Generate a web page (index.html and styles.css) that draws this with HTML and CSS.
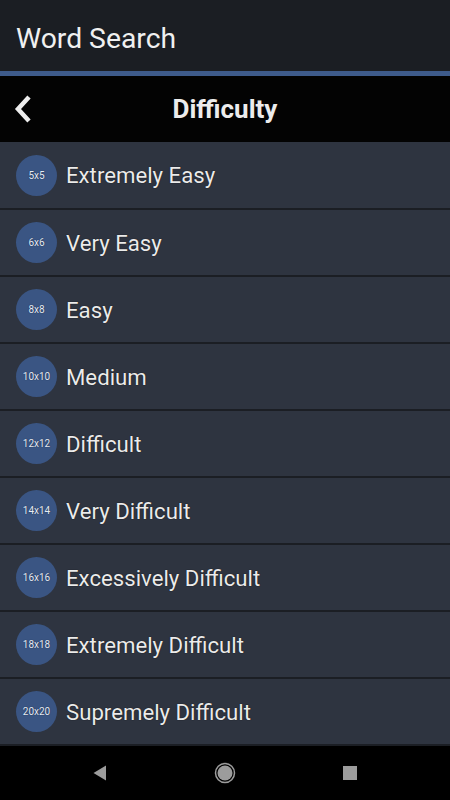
FILE: index.html
```html
<!DOCTYPE html>
<html>
<head>
<meta charset="utf-8">
<link rel="stylesheet" href="styles.css">
</head>
<body>
<div class="app">
  <header class="appbar">Word Search</header>
  <div class="stripe"></div>
  <div class="subbar">
    <svg class="back" width="20" height="30" viewBox="0 0 20 30"><polyline points="15,3 4,15 15,27" fill="none" stroke="#eeeeee" stroke-width="4.5" stroke-linecap="butt" stroke-linejoin="miter"/></svg>
    <h1 class="title">Difficulty</h1>
  </div>
  <ul class="list">
    <li class="row"><span class="badge">5x5</span><span class="label">Extremely Easy</span></li>
    <li class="row"><span class="badge">6x6</span><span class="label">Very Easy</span></li>
    <li class="row"><span class="badge">8x8</span><span class="label">Easy</span></li>
    <li class="row"><span class="badge">10x10</span><span class="label">Medium</span></li>
    <li class="row"><span class="badge">12x12</span><span class="label">Difficult</span></li>
    <li class="row"><span class="badge">14x14</span><span class="label">Very Difficult</span></li>
    <li class="row"><span class="badge">16x16</span><span class="label">Excessively Difficult</span></li>
    <li class="row"><span class="badge">18x18</span><span class="label">Extremely Difficult</span></li>
    <li class="row"><span class="badge">20x20</span><span class="label">Supremely Difficult</span></li>
  </ul>
  <nav class="navbar">
    <svg width="14" height="16" viewBox="0 0 14 16"><polygon points="13,0.5 13,15.5 0.5,8" fill="#9c9c9c"/></svg>
    <svg width="22" height="22" viewBox="0 0 22 22"><circle cx="11" cy="11" r="9.5" fill="none" stroke="#9c9c9c" stroke-width="1.5"/><circle cx="11" cy="11" r="7.5" fill="#9c9c9c"/></svg>
    <svg width="14" height="14" viewBox="0 0 14 14"><rect x="0" y="0" width="14" height="14" fill="#9c9c9c"/></svg>
  </nav>
</div>
</body>
</html>
```
FILE: styles.css
```css
* { box-sizing: border-box; }
html, body { margin: 0; padding: 0; }
body {
  font-family: Roboto, "Liberation Sans", sans-serif;
  background: #000;
  width: 450px;
  height: 800px;
  overflow: hidden;
}
.app { display: flex; flex-direction: column; height: 800px; }
.appbar {
  height: 71px;
  background: #1b1e23;
  color: #f0f0f0;
  font-size: 28.3px;
  display: flex;
  align-items: center;
  padding-left: 16px;
  padding-top: 5px;
}
.stripe { height: 5px; background: #3e5b8b; }
.subbar {
  height: 66px;
  background: #030303;
  display: flex;
  align-items: center;
  justify-content: center;
  position: relative;
}
.back { position: absolute; left: 14px; top: 18px; }
.title {
  margin: 0;
  font-size: 26px;
  font-weight: 700;
  color: #ececec;
}
.list {
  list-style: none;
  margin: 0;
  padding: 0;
  background: #2e343f;
  border-bottom: 2px solid #1b1e24;
}
.row {
  height: 67px;
  border-top: 2px solid #1b1e24;
  display: flex;
  align-items: center;
  padding-left: 16px;
  background: #2e3440;
}
.row:first-child { border-top: 0; height: 66px; }
.badge {
  width: 41px;
  height: 41px;
  border-radius: 50%;
  background: #3a5583;
  color: #e6ecf5;
  font-size: 10px;
  display: flex;
  align-items: center;
  justify-content: center;
  text-shadow: 0 0 1px #0a1a3a;
  flex: none;
}
.label {
  margin-left: 9px;
  font-size: 22.2px;
  color: #ebebeb;
  text-shadow: 0 0 1px #000;
}
.navbar {
  flex: 1;
  background: #000;
  display: flex;
  align-items: center;
  padding-left: 93px;
}
.navbar svg:nth-child(1) { margin-right: 107px; }
.navbar svg:nth-child(2) { margin-right: 107px; }
```
